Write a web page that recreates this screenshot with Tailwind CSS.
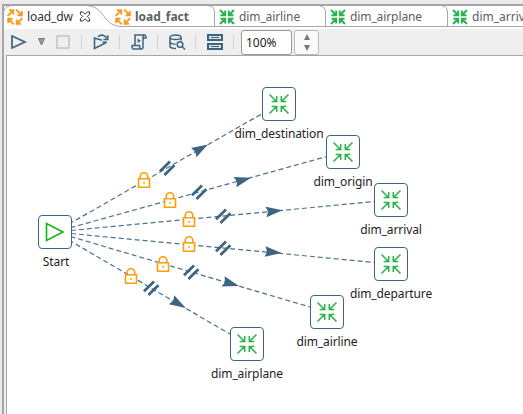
<!DOCTYPE html>
<html lang="en">
<head>
<meta charset="utf-8">
<title>load_dw</title>
<script src="https://cdn.jsdelivr.net/npm/@tailwindcss/browser@4"></script>
</head>
<body class="w-[523px] h-[414px] overflow-hidden bg-[#ebebeb] font-['Noto_Sans',sans-serif] text-[12px] text-[#1c1c1c]">
<svg class="hidden">
  <symbol id="job" viewBox="0 0 16 16"><path fill="none" stroke="#f79a20" stroke-width="1.900" d="M.7 6.800 6 1.500M2 1.200H6.300V5.500M9.200.7l5.300 5.300M14.800 2V6.300H10.500M6.800 15.300 1.500 10M1.200 14V9.700H5.500M15.300 9.200l-5.300 5.300M9.700 10.500V14.800H14"/></symbol>
  <symbol id="in" viewBox="0 0 16 16"><path fill="none" stroke="#25b34b" stroke-width="1.900" d="M1 1l5 5M1.500 6.200H6.200V1.500M15 1l-5 5M14.500 6.200H9.800V1.500M1 15l5-5M1.500 9.800H6.200v4.700M15 15l-5-5M14.500 9.800H9.800v4.700"/></symbol>
  <symbol id="node" viewBox="0 0 20 20"><path fill="none" stroke="#25b34b" stroke-width="1.500" d="M.5.5l7 7M2.700 7.600h5V2M19.500.5l-7 7M17.300 7.600h-5V2M.5 19.500l7-7M2.700 12.400h5V18M19.500 19.500l-7-7M17.300 12.400h-5V18"/></symbol>
  <symbol id="slash" viewBox="-10 -10 20 20"><path fill="none" stroke="#3d6480" stroke-width="2.700" d="M-7 3.300 3-6.500M-2.600 7 7.400-2.800"/></symbol>
  <symbol id="arrow" viewBox="-10 -10 20 20"><path fill="#3d6480" d="M9 0-7.500-5.300-5.500 0-7.500 5.300z"/></symbol>
  <symbol id="lock" viewBox="0 0 14 17"><path fill="#fff" d="M1 7h12v9H1z"/><path fill="none" stroke="#ff9d0a" stroke-width="1.600" d="M1.500 7.300h11v8.400h-11zM3.200 7V5.200a3.800 4 0 0 1 7.600 0V7"/><path fill="#ff9d0a" d="M6.200 10.500h1.600v1.800H6.200z"/></symbol>
</svg>
<div class="h-full pl-[2px] pt-[4px]">
 <div class="flex h-full flex-col border-l-2 border-t-2 border-[#a6a6a6] bg-[#efefef]">
  <nav class="relative flex h-[21px] w-[519px] shrink-0 overflow-hidden bg-white text-[#5a5f66]">
    <svg class="absolute inset-0" width="519" height="21" fill="none" stroke="#a6a6a6"><path d="M0 5Q1 0 6 0M84 0C101 0 98 20.500 118 20.500H519M205 0Q210 0 210.500 6V20.500M316 0Q321 0 321.500 6V20.500M438 0Q443 0 443.500 6V20.500"/></svg>
    <div class="relative flex w-[107px] shrink-0 items-center pl-[3px] text-[#30353b]"><svg class="mr-[4px] size-4 shrink-0"><use href="#job"/></svg><span class="w-[46px] tracking-[-0.1px]">load_dw</span><svg class="ml-[6px] h-[11px] w-[12px]" viewBox="0 0 12 12"><path d="M1 1h2.500L6 3.500 8.500 1H11v2.500L8.500 6 11 8.500V11H8.500L6 8.500 3.500 11H1V8.500L3.500 6 1 3.500z" fill="#fff" stroke="#222"/></svg></div>
    <div class="relative flex w-[107px] shrink-0 items-center pl-[4px] font-bold"><svg class="mr-[4px] size-4"><use href="#job"/></svg><span>load_fact</span></div>
    <div class="relative flex w-[111px] shrink-0 items-center pl-px"><svg class="mr-[4px] size-4"><use href="#in"/></svg><span class="tracking-[-0.1px]">dim_airline</span></div>
    <div class="relative flex w-[122px] shrink-0 items-center pl-px"><svg class="mr-[4px] size-4"><use href="#in"/></svg><span class="tracking-[-0.1px]">dim_airplane</span></div>
    <div class="relative flex shrink-0 items-center pl-px"><svg class="mr-[4px] size-4"><use href="#in"/></svg><span>dim_arrival</span></div>
  </nav>
  <div class="flex h-[28px] shrink-0 items-center border-t-2 border-white pl-[6px]">
    <svg class="mr-[11px] h-[14px] w-[17px]" viewBox="0 0 17 14"><path d="M2 1 15 7 2 13z" fill="none" stroke="#3d6480" stroke-width="1.700"/></svg>
    <svg class="mr-[11px] h-[8px] w-[7px]" viewBox="0 0 7 8"><path d="M.5.5h6L3.500 7z" fill="#999" stroke="#777"/></svg>
    <svg class="mr-[11px] size-[14px]" viewBox="0 0 14 14"><path d="M1 1h12v12H1z" fill="none" stroke="#c4c4c4" stroke-width="1.500"/></svg>
    <i class="h-[14px] w-px bg-[#d2d2d2]"></i>
    <svg class="ml-[11px] mr-[10px] size-4" viewBox="0 0 16 16" fill="none" stroke="#3d6480" stroke-width="1.600"><path d="M9 6.200 1.500 4v10.500L12.500 9M5 2.700C8 0 12 .8 14 4.500"/><path d="M14.900 1.200v4.300h-4.500M9.500 8.200 14 8.300" stroke-width="1.400"/></svg>
    <i class="h-[14px] w-px bg-[#d2d2d2]"></i>
    <svg class="ml-[11px] mr-[10px] size-4" viewBox="0 0 16 16" fill="none" stroke="#3d6480" stroke-width="1.500"><path d="M4 11V1h9.500Q15 1 15 4h-3v9q0 2-2 2H2.500Q1 15 1 11.500h7.500q0 3.500 2 3.500M12 4q0-3 1.500-3"/><path d="M6.500 4.500 10 6.700 6.500 9z" fill="#3d6480" stroke="none"/></svg>
    <i class="h-[14px] w-px bg-[#d2d2d2]"></i>
    <svg class="ml-[11px] mr-[9px] h-4 w-[17px]" viewBox="0 0 17 16" fill="none" stroke="#3d6480" stroke-width="1.500"><path d="M7 14.500Q1 14.500 1 12V3.500M12 3.500v3M1 8q1 2.200 5.500 2.200"/><ellipse cx="6.500" cy="3.300" rx="5.500" ry="2.300"/><circle cx="11" cy="10.500" r="2.800"/><path d="m13 12.500 3 3"/></svg>
    <i class="h-[14px] w-px bg-[#d2d2d2]"></i>
    <svg class="ml-[11px] mr-[10px] h-4 w-[16px]" viewBox="0 0 16 16"><path d="M0 0h16v7H0zM0 9h16v7H0z" fill="#3d6480"/><path d="M2 2h12v3H2zM2 11h12v3H2z" fill="#dce5eb"/><path d="M4 3.500h8M4 12.500h8" stroke="#3d6480"/></svg>
    <i class="h-[14px] w-px bg-[#d2d2d2]"></i>
    <div class="ml-[7px] flex h-[25px] w-[51px] items-center rounded-[3px] border border-[#999] bg-white pl-[4px]"><span class="pt-px">100%</span></div>
    <div class="ml-[2px] flex h-[25px] w-[25px] flex-col items-center justify-center gap-[5px] rounded-[3px] border border-[#bababa] bg-[#fafafa]"><svg width="6" height="6"><path d="M0 6h6L3 0z" fill="#777"/></svg><svg width="6" height="6"><path d="M0 0h6L3 6z" fill="#777"/></svg></div>
  </div>
  <main class="ml-[2px] min-h-0 flex-1 border-l border-t border-[#a6a6a6] bg-white"></main>
 </div>
</div>
<svg class="absolute inset-0" width="523" height="414">
  <g stroke="#4a708c" stroke-width="1.200" stroke-dasharray="5 3" fill="none"><path d="M55 232 279 104"/><path d="M55 232 343 152"/><path d="M55 232 391 200"/><path d="M55 232 391 264"/><path d="M55 232 327 312"/><path d="M55 232 247 344"/></g>
  <g><use href="#slash" x="157" y="158" width="20" height="20"/><use href="#slash" x="189" y="182" width="20" height="20"/><use href="#slash" x="213" y="206" width="20" height="20"/><use href="#slash" x="213" y="238" width="20" height="20"/><use href="#slash" x="181" y="262" width="20" height="20"/><use href="#slash" x="141" y="278" width="20" height="20"/></g>
  <g><g transform="translate(200.200 149) rotate(-29.700)"><use href="#arrow" x="-10" y="-10" width="20" height="20"/></g><g transform="translate(242.300 180.200) rotate(-15.500)"><use href="#arrow" x="-10" y="-10" width="20" height="20"/></g><g transform="translate(273.500 211.200) rotate(-5.400)"><use href="#arrow" x="-10" y="-10" width="20" height="20"/></g><g transform="translate(272.500 252.200) rotate(5.400)"><use href="#arrow" x="-10" y="-10" width="20" height="20"/></g><g transform="translate(230.300 283.500) rotate(16.400)"><use href="#arrow" x="-10" y="-10" width="20" height="20"/></g><g transform="translate(178 303.500) rotate(30.300)"><use href="#arrow" x="-10" y="-10" width="20" height="20"/></g></g>
  <g><use href="#lock" x="137" y="171.500" width="14" height="17"/><use href="#lock" x="163" y="191.500" width="14" height="17"/><use href="#lock" x="182" y="210.500" width="14" height="17"/><use href="#lock" x="182" y="235.500" width="14" height="17"/><use href="#lock" x="156" y="255.500" width="14" height="17"/><use href="#lock" x="124" y="267.500" width="14" height="17"/></g>
</svg>
<div class="tracking-[-0.1px]">
<div class="absolute left-[38px] top-[215px] flex size-[34px] items-center justify-center rounded-[4px] border border-[#3d6480] bg-white"><svg width="20" height="20" fill="none" stroke="#12b312" stroke-width="1.600"><path d="M1.500 1.500v17L18 10z"/></svg></div><span class="absolute left-[56px] top-[253px] -translate-x-1/2 leading-[18px]">Start</span>
<div class="absolute left-[262px] top-[87px] flex size-[34px] items-center justify-center rounded-[4px] border border-[#3d6480] bg-white"><svg class="size-5"><use href="#node"/></svg></div><span class="absolute left-[279px] top-[125px] -translate-x-1/2 leading-[18px]">dim_destination</span>
<div class="absolute left-[326px] top-[135px] flex size-[34px] items-center justify-center rounded-[4px] border border-[#3d6480] bg-white"><svg class="size-5"><use href="#node"/></svg></div><span class="absolute left-[343px] top-[173px] -translate-x-1/2 leading-[18px]">dim_origin</span>
<div class="absolute left-[374px] top-[183px] flex size-[34px] items-center justify-center rounded-[4px] border border-[#3d6480] bg-white"><svg class="size-5"><use href="#node"/></svg></div><span class="absolute left-[391px] top-[221px] -translate-x-1/2 leading-[18px]">dim_arrival</span>
<div class="absolute left-[374px] top-[247px] flex size-[34px] items-center justify-center rounded-[4px] border border-[#3d6480] bg-white"><svg class="size-5"><use href="#node"/></svg></div><span class="absolute left-[391px] top-[285px] -translate-x-1/2 leading-[18px]">dim_departure</span>
<div class="absolute left-[310px] top-[295px] flex size-[34px] items-center justify-center rounded-[4px] border border-[#3d6480] bg-white"><svg class="size-5"><use href="#node"/></svg></div><span class="absolute left-[327px] top-[333px] -translate-x-1/2 leading-[18px]">dim_airline</span>
<div class="absolute left-[230px] top-[327px] flex size-[34px] items-center justify-center rounded-[4px] border border-[#3d6480] bg-white"><svg class="size-5"><use href="#node"/></svg></div><span class="absolute left-[247px] top-[365px] -translate-x-1/2 leading-[18px]">dim_airplane</span>
</div>
</body>
</html>
